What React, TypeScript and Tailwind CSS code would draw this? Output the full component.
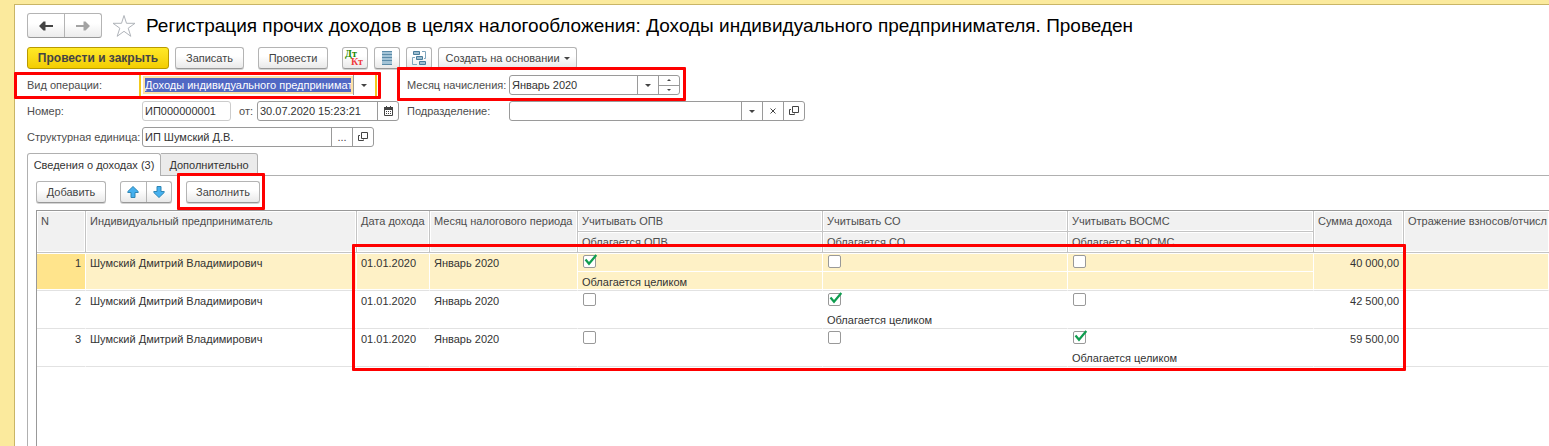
import type { ReactNode } from 'react';

const buttonBase =
  'flex h-[22px] shrink-0 items-center justify-center rounded-[3px] border border-[#b4b4b4] border-b-[#989898] bg-linear-to-b from-white from-40% to-[#e9e9e9] text-[#444] shadow-[0_1px_0_#d4d4d4] whitespace-nowrap';
const fieldBox = 'flex h-5 overflow-hidden rounded-[3px] border border-[#9a9a9a] bg-white';
const fieldInput = 'min-w-0 flex-1 appearance-none bg-transparent px-[2px] text-[#333] outline-none';
const fieldButton =
  'flex w-[21px] shrink-0 items-center justify-center border-l border-[#9a9a9a] text-[#444]';
const labelText = 'whitespace-nowrap text-[#4d4d4d]';

function Highlight({ className }: { className: string }) {
  return <div className={`pointer-events-none absolute z-10 rounded-[1px] border-3 border-[#fe0000] ${className}`} />;
}

function Caret() {
  return (
    <svg width="6" height="3" viewBox="0 0 6 3" fill="#444" aria-hidden="true">
      <path d="M0 0h6L3 3z" />
    </svg>
  );
}

function SpinCaret({ up }: { up?: boolean }) {
  return (
    <svg width="4" height="2" viewBox="0 0 4 2" fill="#444" aria-hidden="true">
      <path d={up ? 'M0 2h4L2 0z' : 'M0 0h4L2 2z'} />
    </svg>
  );
}

function OpenIcon() {
  return (
    <svg width="10" height="10" viewBox="0 0 10 10" fill="none" stroke="#444" aria-hidden="true">
      <path d="M3.5 0.5h6v6h-6zM2 3.5H0.5v5h5V7.5" />
    </svg>
  );
}

function CalendarIcon() {
  return (
    <svg width="9" height="10" viewBox="0 0 9 10" aria-hidden="true">
      <path d="M0.5 1.5h8v8h-8z" fill="none" stroke="#444" />
      <path d="M0 1h9v3H0zM2 0h1v2H2zM6 0h1v2H6z" fill="#444" />
      <path d="M2 5h1v1H2zM4 5h1v1H4zM6 5h1v1H6zM2 7h1v1H2zM4 7h1v1H4zM6 7h1v1H6z" fill="#444" />
    </svg>
  );
}

function NavArrow({ right, color }: { right?: boolean; color: string }) {
  return (
    <svg width="14" height="10" viewBox="0 0 14 10" fill={color} aria-hidden="true">
      {right ? (
        <path d="M14 5L9.500 0.500H7.500V4H0v2h7.500v3.500h2z" />
      ) : (
        <path d="M0 5L4.500 0.500h2V4H14v2H6.500v3.500h-2z" />
      )}
    </svg>
  );
}

function MoveArrow({ down }: { down?: boolean }) {
  return (
    <svg width="12" height="12" viewBox="0 0 12 12" aria-hidden="true">
      <path
        d={down ? 'M4 0.500h4v5h3.200v1L6 11.500 0.800 6.500v-1H4z' : 'M4 11.500h4v-5h3.200v-1L6 0.500 0.800 5.500v1H4z'}
        fill="#45b0ef"
        stroke="#2f86b4"
      />
    </svg>
  );
}

function StarIcon() {
  return (
    <svg width="24" height="24" viewBox="0 0 24 24" fill="#fff" stroke="#b0b4ba" aria-hidden="true">
      <path d="M12 1.500L14.500 9.300 23 9.300 16.200 14.200 18.800 22.300 12 17.300 5.200 22.300 7.800 14.200 1 9.300 9.500 9.300z" />
    </svg>
  );
}

function JournalIcon() {
  return (
    <svg width="10" height="14" viewBox="0 0 10 14" aria-hidden="true">
      <path d="M0 0h10v14H0z" fill="#a3c3d6" />
      <path d="M0 0.500h10M0 3.500h10M0 6.500h10M0 9.500h10M0 13.500h10" stroke="#5b8ba8" />
    </svg>
  );
}

function StructureIcon() {
  return (
    <svg width="15" height="15" viewBox="0 0 15 15" aria-hidden="true">
      <g fill="#9dbdd0" stroke="#4a7d9b">
        <path d="M1.500 0.500h6v3h-6zM4.500 5.500h6v3h-6zM7.500 10.500h6v3h-6z" />
      </g>
      <path d="M10 0.500h3.500v7H12M3 6.500H0.500v7H5" fill="none" stroke="#7fa6bd" />
    </svg>
  );
}

function Tick({ checked, label }: { checked: boolean; label: string }) {
  return (
    <span className="relative block size-[13px]">
      <input
        type="checkbox"
        defaultChecked={checked}
        aria-label={label}
        className="peer block size-[13px] appearance-none rounded-[2px] border border-[#999] bg-white"
      />
      <svg
        className="pointer-events-none absolute -top-px left-0 hidden peer-checked:block"
        width="15"
        height="13"
        viewBox="0 0 15 13"
        fill="none"
        stroke="#0f9d4f"
        strokeWidth="2.200"
        aria-hidden="true"
      >
        <path d="M2.500 5.500L6 9.800 13.300 1" />
      </svg>
    </span>
  );
}

function Th({ children, rowSpan, last }: { children: ReactNode; rowSpan?: number; last?: boolean }) {
  return (
    <th
      rowSpan={rowSpan}
      className={`h-[21px] overflow-hidden border-b border-[#c4c4c4] bg-[#f1f1f1] px-1 py-0 text-left align-top font-normal leading-5 whitespace-nowrap text-[#4d4d4d] shadow-[inset_0_0_0_1px_#fff] ${last ? '' : 'border-r'}`}
    >
      {children}
    </th>
  );
}

const rows = [
  { n: 1, sum: '40 000,00', taxed: 0 },
  { n: 2, sum: '42 500,00', taxed: 1 },
  { n: 3, sum: '59 500,00', taxed: 2 },
];
const funds = ['ОПВ', 'СО', 'ВОСМС'];

export default function App() {
  return (
    <div className="flex min-h-screen flex-col overflow-hidden bg-[#fbea9d] pt-1 pl-[14px] font-['Liberation_Sans',Arial,sans-serif] text-[11px] leading-4">
      <main className="flex flex-1 flex-col border-t border-l border-[#c9b566] bg-white pt-2 pl-3">
        <header className="flex h-[25px] items-center gap-[10px]">
          <div className="flex h-[25px] w-[75px] overflow-hidden rounded-[3px] border border-[#b4b4b4] border-b-[#989898] bg-linear-to-b from-white from-40% to-[#ececec]">
            <button type="button" aria-label="Назад" className="flex flex-1 items-center justify-center">
              <NavArrow color="#444" />
            </button>
            <button type="button" aria-label="Вперед" className="flex flex-1 items-center justify-center border-l border-[#b4b4b4]">
              <NavArrow right color="#a3a3a3" />
            </button>
          </div>
          <button type="button" aria-label="В избранное">
            <StarIcon />
          </button>
          <h1 className="text-[19px] leading-6 whitespace-nowrap text-black">
            Регистрация прочих доходов в целях налогообложения: Доходы индивидуального предпринимателя. Проведен
          </h1>
        </header>

        <div className="mt-[9px] flex gap-[6px]">
          <button
            type="button"
            className="flex h-[22px] w-[142px] items-center justify-center rounded-[3px] border border-[#b99a00] bg-linear-to-b from-[#ffe925] to-[#f3cd00] text-xs font-bold whitespace-nowrap text-[#444]"
          >
            Провести и закрыть
          </button>
          <button type="button" className={`${buttonBase} w-[69px]`}>Записать</button>
          <button type="button" className={`${buttonBase} mx-2 w-[70px]`}>Провести</button>
          <button
            type="button"
            aria-label="Дебет Кредит"
            className={`${buttonBase} w-[26px] flex-col font-['Liberation_Serif',serif] text-[10px] leading-2 font-bold`}
          >
            <span className="-ml-2 text-[#1c8a00]">Дт</span>
            <span className="ml-1 text-[#f03c3c]">Кт</span>
          </button>
          <button type="button" aria-label="Журнал" className={`${buttonBase} w-[26px]`}>
            <JournalIcon />
          </button>
          <button type="button" aria-label="Структура подчиненности" className={`${buttonBase} w-[26px]`}>
            <StructureIcon />
          </button>
          <button type="button" className={`${buttonBase} w-[139px] gap-1`}>
            Создать на основании <Caret />
          </button>
        </div>

        <form className="mt-[6px] flex flex-col gap-[6px]">
          <div className="flex h-5 items-center">
            <div className="relative flex w-[380px] items-center">
              <Highlight className="-top-[3px] -left-[13px] h-[27px] w-[367px]" />
              <label htmlFor="operation" className={`${labelText} w-[115px]`}>Вид операции:</label>
              <div className="flex h-5 w-[232px] bg-white ring-2 ring-[#f2c91d] ring-offset-1">
                <div className="my-px ml-px flex flex-1 border-2 border-[#fde2a6]">
                  <select id="operation" className="h-[14px] w-0 flex-1 appearance-none overflow-hidden bg-[#5168c4] leading-[14px] text-white outline-none">
                    <option>Доходы индивидуального предпринимателя</option>
                  </select>
                </div>
                <span className={fieldButton}><Caret /></span>
              </div>
            </div>
            <div className="relative flex items-center">
              <Highlight className="-top-2 -left-[10px] h-[34px] w-[289px]" />
              <label htmlFor="month" className={`${labelText} w-[102px]`}>Месяц начисления:</label>
              <div className={`${fieldBox} w-[171px]`}>
                <input id="month" defaultValue="Январь 2020" className={fieldInput} />
                <button type="button" aria-label="Выбрать месяц" className={fieldButton}><Caret /></button>
                <div className="flex w-[21px] flex-col border-l border-[#9a9a9a]">
                  <button type="button" aria-label="Следующий месяц" className="flex flex-1 items-center justify-center border-b border-[#9a9a9a]">
                    <SpinCaret up />
                  </button>
                  <button type="button" aria-label="Предыдущий месяц" className="flex flex-1 items-center justify-center">
                    <SpinCaret />
                  </button>
                </div>
              </div>
            </div>
          </div>

          <div className="flex h-5 items-center">
            <div className="flex w-[380px] items-center">
              <label htmlFor="number" className={`${labelText} w-[115px]`}>Номер:</label>
              <div className="flex h-5 w-[89px] rounded-[3px] border border-[#ccc]">
                <input id="number" defaultValue="ИП000000001" className={fieldInput} />
              </div>
              <label htmlFor="date" className={`${labelText} ml-2 w-[18px]`}>от:</label>
              <div className={`${fieldBox} w-[142px]`}>
                <input id="date" defaultValue="30.07.2020 15:23:21" className={fieldInput} />
                <button type="button" aria-label="Календарь" className={fieldButton}><CalendarIcon /></button>
              </div>
            </div>
            <label htmlFor="department" className={`${labelText} w-[102px]`}>Подразделение:</label>
            <div className={`${fieldBox} w-[296px]`}>
              <select id="department" className={fieldInput}>
                <option />
              </select>
              <span className={fieldButton}><Caret /></span>
              <button type="button" aria-label="Очистить" className={fieldButton}>
                <svg width="6" height="6" viewBox="0 0 6 6" stroke="#444" aria-hidden="true">
                  <path d="M0.500 0.500l5 5M5.500 0.500l-5 5" />
                </svg>
              </button>
              <button type="button" aria-label="Открыть подразделение" className={fieldButton}><OpenIcon /></button>
            </div>
          </div>

          <div className="flex h-5 items-center">
            <label htmlFor="unit" className={`${labelText} w-[115px]`}>Структурная единица:</label>
            <div className={`${fieldBox} w-[232px]`}>
              <input id="unit" defaultValue="ИП Шумский Д.В." className={fieldInput} />
              <button type="button" aria-label="Выбрать" className={fieldButton}>...</button>
              <button type="button" aria-label="Открыть" className={fieldButton}><OpenIcon /></button>
            </div>
          </div>
        </form>

        <div role="tablist" className="mt-[6px] flex h-[23px]">
          <button type="button" role="tab" aria-selected="true" className="w-[134px] rounded-t-[3px] border border-b-0 border-[#b0b0b0] bg-white whitespace-nowrap text-[#333]">
            Сведения о доходах (3)
          </button>
          <button type="button" role="tab" aria-selected="false" className="w-[97px] rounded-tr-[3px] border border-l-0 border-[#b0b0b0] bg-[#ebebeb] whitespace-nowrap text-[#333]">
            Дополнительно
          </button>
          <div className="flex-1 border-b border-[#b0b0b0]" />
        </div>

        <section className="flex flex-1 flex-col border-l border-[#b0b0b0] pt-[5px] pl-2">
          <div className="flex gap-[14px]">
            <button type="button" className={`${buttonBase} w-[70px]`}>Добавить</button>
            <div className={`${buttonBase} w-[52px]`}>
              <button type="button" aria-label="Переместить вверх" className="flex h-full flex-1 items-center justify-center">
                <MoveArrow />
              </button>
              <button type="button" aria-label="Переместить вниз" className="flex h-full flex-1 items-center justify-center border-l border-[#b4b4b4]">
                <MoveArrow down />
              </button>
            </div>
            <div className="relative">
              <Highlight className="-top-2 -left-[9px] h-[37px] w-[88px]" />
              <button type="button" className={`${buttonBase} w-[74px]`}>Заполнить</button>
            </div>
          </div>

          <div className="relative mt-[7px] flex-1 border-t border-l border-[#999]">
            <Highlight className="top-[33px] left-[315px] h-[127px] w-[1054px]" />
            <table className="w-full table-fixed border-separate border-spacing-0">
              <colgroup>
                <col className="w-[49px]" />
                <col className="w-[271px]" />
                <col className="w-[73px]" />
                <col className="w-[148px]" />
                <col className="w-[245px]" />
                <col className="w-[245px]" />
                <col className="w-[246px]" />
                <col className="w-[90px]" />
                <col />
              </colgroup>
              <thead>
                <tr>
                  <Th rowSpan={2}>N</Th>
                  <Th rowSpan={2}>Индивидуальный предприниматель</Th>
                  <Th rowSpan={2}>Дата дохода</Th>
                  <Th rowSpan={2}>Месяц налогового периода</Th>
                  {funds.map((fund) => (
                    <Th key={fund}>Учитывать {fund}</Th>
                  ))}
                  <Th rowSpan={2}>Сумма дохода</Th>
                  <Th rowSpan={2} last>Отражение взносов/отчисл</Th>
                </tr>
                <tr>
                  {funds.map((fund) => (
                    <Th key={fund}>Облагается {fund}</Th>
                  ))}
                </tr>
              </thead>
              <tbody>
                {rows.map((row) => {
                  const active = row.n === 1;
                  const cell = `h-[38px] border-b border-b-[#e2e2e2] border-r border-r-white px-1 py-0 align-top leading-5 whitespace-nowrap text-[#333] ${active ? 'bg-[#fef1c6] shadow-[inset_0_1px_0_#fff,inset_0_-1px_0_#fff]' : ''}`;
                  return (
                    <tr key={row.n}>
                      <td className={`${cell} text-right ${active ? 'bg-[#ffe48c]!' : ''}`}>{row.n}</td>
                      <td className={cell}>Шумский Дмитрий Владимирович</td>
                      <td className={cell}>01.01.2020</td>
                      <td className={cell}>Январь 2020</td>
                      {funds.map((fund, i) => (
                        <td key={fund} className={`${cell} px-0!`}>
                          <div className={`h-[19px] border-b px-[5px] pt-[2px] ${active ? 'border-white' : 'border-transparent'}`}>
                            <Tick checked={row.taxed === i} label={`Учитывать ${fund}, строка ${row.n}`} />
                          </div>
                          <div className="h-[18px] px-1">{row.taxed === i ? 'Облагается целиком' : ''}</div>
                        </td>
                      ))}
                      <td className={`${cell} text-right`}>{row.sum}</td>
                      <td className={cell} />
                    </tr>
                  );
                })}
              </tbody>
            </table>
          </div>
        </section>
      </main>
    </div>
  );
}
